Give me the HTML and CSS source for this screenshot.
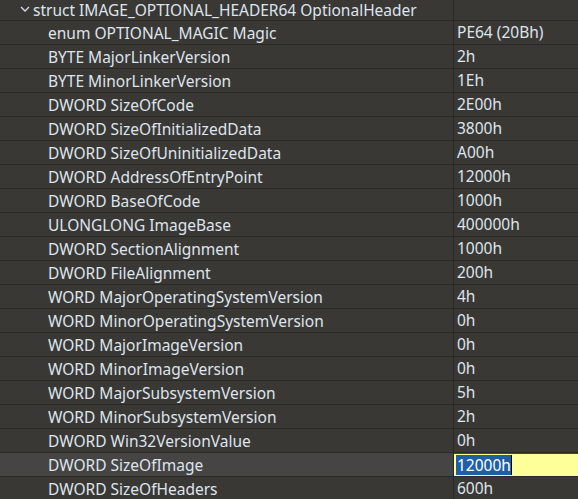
FILE: index.html
```html
<!DOCTYPE html>
<html>
<head>
<meta charset="utf-8">
<link rel="stylesheet" href="styles.css">
</head>
<body>
<div class="tree">
  <div class="row parent">
    <div class="name"><svg class="chev" width="10" height="7" viewBox="0 0 10 7"><path d="M1 1 L5 5 L9 1" fill="none" stroke="#d8dde4" stroke-width="1.3"/></svg>struct IMAGE_OPTIONAL_HEADER64 OptionalHeader</div>
    <div class="value"></div>
  </div>
  <div class="row"><div class="name child">enum OPTIONAL_MAGIC Magic</div><div class="value">PE64 (20Bh)</div></div>
  <div class="row"><div class="name child">BYTE MajorLinkerVersion</div><div class="value">2h</div></div>
  <div class="row"><div class="name child">BYTE MinorLinkerVersion</div><div class="value">1Eh</div></div>
  <div class="row"><div class="name child">DWORD SizeOfCode</div><div class="value">2E00h</div></div>
  <div class="row"><div class="name child">DWORD SizeOfInitializedData</div><div class="value">3800h</div></div>
  <div class="row"><div class="name child">DWORD SizeOfUninitializedData</div><div class="value">A00h</div></div>
  <div class="row"><div class="name child">DWORD AddressOfEntryPoint</div><div class="value">12000h</div></div>
  <div class="row"><div class="name child">DWORD BaseOfCode</div><div class="value">1000h</div></div>
  <div class="row"><div class="name child">ULONGLONG ImageBase</div><div class="value">400000h</div></div>
  <div class="row"><div class="name child">DWORD SectionAlignment</div><div class="value">1000h</div></div>
  <div class="row"><div class="name child">DWORD FileAlignment</div><div class="value">200h</div></div>
  <div class="row"><div class="name child">WORD MajorOperatingSystemVersion</div><div class="value">4h</div></div>
  <div class="row"><div class="name child">WORD MinorOperatingSystemVersion</div><div class="value">0h</div></div>
  <div class="row"><div class="name child">WORD MajorImageVersion</div><div class="value">0h</div></div>
  <div class="row"><div class="name child">WORD MinorImageVersion</div><div class="value">0h</div></div>
  <div class="row"><div class="name child">WORD MajorSubsystemVersion</div><div class="value">5h</div></div>
  <div class="row"><div class="name child">WORD MinorSubsystemVersion</div><div class="value">2h</div></div>
  <div class="row"><div class="name child">DWORD Win32VersionValue</div><div class="value">0h</div></div>
  <div class="row selected"><div class="name child">DWORD SizeOfImage</div><div class="value"><span class="editor"><span class="sel">12000h</span><span class="caret"></span></span></div></div>
  <div class="row"><div class="name child">DWORD SizeOfHeaders</div><div class="value">600h</div></div>
</div>
</body>
</html>
```

FILE: styles.css
```css
html, body {
  margin: 0;
  padding: 0;
  background: #3a3835;
  overflow: hidden;
}
body {
  width: 578px;
  height: 499px;
  font-family: "Noto Sans", "Open Sans", sans-serif;
  font-size: 15.5px;
  color: #dde4ec;
}
.row {
  display: flex;
  height: 23px;
  border-bottom: 1px solid #2a2927;
}
.row.parent {
  height: 20px;
}
.name {
  width: 453px;
  flex: none;
  border-right: 1px solid #2a2927;
  display: flex;
  align-items: center;
  white-space: nowrap;
  overflow: hidden;
}
.parent .name {
  padding-left: 20px;
  width: 433px;
}
.chev {
  margin-right: 3px;
  margin-top: -1px;
}
.child {
  padding-left: 48px;
  width: 405px;
}
.value {
  flex: 1;
  padding-left: 3px;
  line-height: 23px;
  white-space: nowrap;
}
.selected {
  background: #464544;
}
.selected .value {
  padding-left: 0;
}
.editor {
  display: flex;
  align-items: center;
  height: 22px;
  margin-top: 1px;
  background: #ffff99;
  padding-left: 2px;
}
.sel {
  background: #1f5fa6;
  color: #ffffff;
  line-height: 20px;
  padding-left: 1px;
}
.caret {
  display: inline-block;
  width: 1px;
  height: 20px;
  background: #000;
}
```
